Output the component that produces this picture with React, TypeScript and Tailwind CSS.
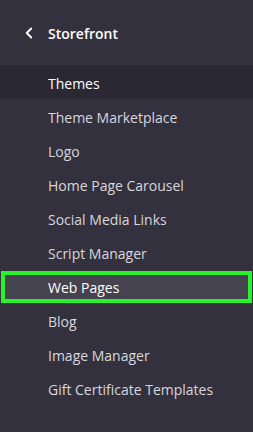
import { ChevronLeft } from "lucide-react";

const items = [
  "Themes",
  "Theme Marketplace",
  "Logo",
  "Home Page Carousel",
  "Social Media Links",
  "Script Manager",
  "Web Pages",
  "Blog",
  "Image Manager",
  "Gift Certificate Templates",
];

export default function App() {
  return (
    <div
      className="w-[253px] h-[432px] bg-[#33313d] overflow-hidden"
      style={{ fontFamily: '"Open Sans", "Noto Sans", sans-serif' }}
    >
      <div className="h-[65px] flex items-center pl-[20px] pt-[1px] text-white">
        <ChevronLeft size={18} strokeWidth={2.5} />
        <span className="ml-[10px] text-[14px] font-semibold">Storefront</span>
      </div>
      {items.map((item) => {
        if (item === "Themes") {
          return (
            <div key={item} className="h-[34px] flex items-center pl-[48px] pt-[2px] bg-[#2a2933] text-[14px] text-white">
              {item}
            </div>
          );
        }
        if (item === "Web Pages") {
          return (
            <div key={item} className="h-[34px] pt-[2px]">
              <div className="h-[32px] mx-[1px] border-4 border-[#28f22a] bg-[#45434f] flex items-center pl-[43px] text-[14px] text-white">
                {item}
              </div>
            </div>
          );
        }
        return (
          <div key={item} className="h-[34px] flex items-center pl-[48px] pt-[2px] text-[14px] text-[#d8d7dd]">
            {item}
          </div>
        );
      })}
    </div>
  );
}
